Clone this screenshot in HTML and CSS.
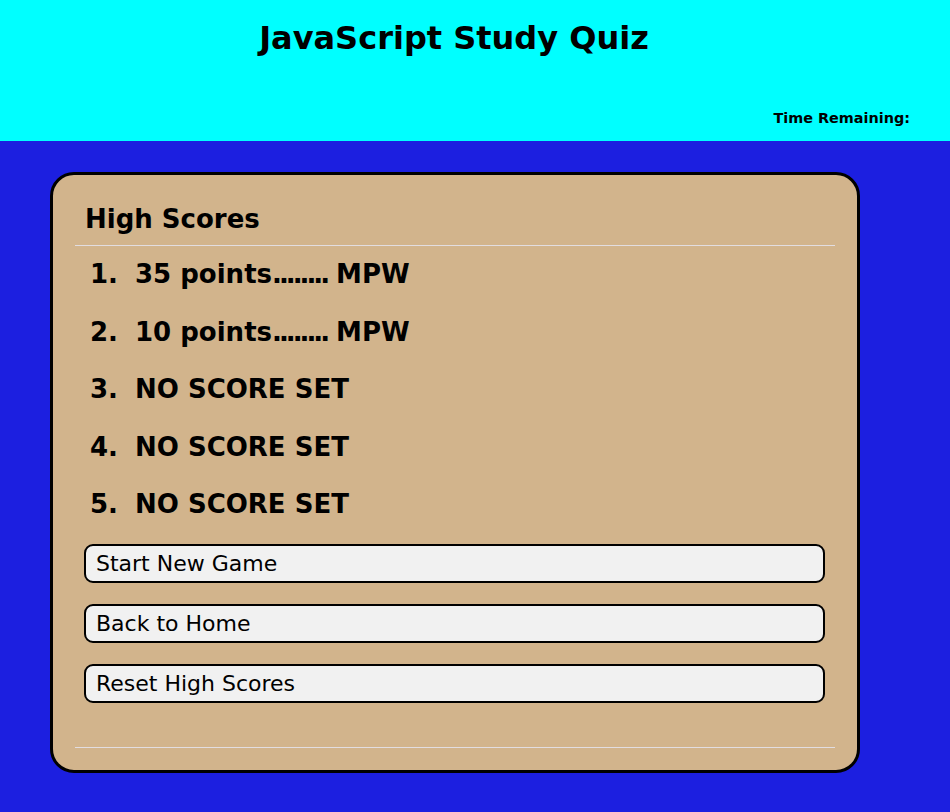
FILE: index.html
```html
<!DOCTYPE html>
<html>
<head>
<meta charset="utf-8">
<link rel="stylesheet" href="styles.css">
</head>
<body>
<header class="top">
  <h1 class="title">JavaScript Study Quiz</h1>
  <div class="timer">Time Remaining:</div>
</header>
<main class="main">
  <section class="card">
    <h2 class="card-title">High Scores</h2>
    <hr class="rule">
    <ol class="scores">
      <li>35 points<span class="dots">........</span> MPW</li>
      <li>10 points<span class="dots">........</span> MPW</li>
      <li>NO SCORE SET</li>
      <li>NO SCORE SET</li>
      <li>NO SCORE SET</li>
    </ol>
    <div class="actions">
      <button class="btn">Start New Game</button>
      <button class="btn">Back to Home</button>
      <button class="btn">Reset High Scores</button>
    </div>
    <hr class="rule rule-bottom">
  </section>
</main>
</body>
</html>
```
FILE: styles.css
```css
* { box-sizing: border-box; }
html, body { margin: 0; padding: 0; }
body {
  background: #1c1fe0;
  font-family: "DejaVu Sans", sans-serif;
  color: #000;
  min-height: 812px;
}
.top {
  background: #00ffff;
  height: 141px;
  display: flex;
  flex-direction: column;
  justify-content: space-between;
  padding: 0 40px 15px 0;
}
.title {
  margin: 19px 0 0;
  text-align: center;
  font-size: 32px;
  font-weight: bold;
  padding-right: 2px;
}
.timer {
  text-align: right;
  font-size: 14.4px;
  font-weight: bold;
}
.main {
  padding: 31px 90px 40px 50px;
}
.card {
  background: #d2b48c;
  border: 3px solid #000;
  border-radius: 24px;
  padding: 24px 22px 22px;
}
.card-title {
  margin: 0;
  padding-left: 10px;
  font-size: 26px;
  font-weight: bold;
  line-height: 40px;
}
.rule {
  border: 0;
  border-top: 1px solid #e2dde0;
  margin: 6px 0 0;
}
.scores {
  margin: 0;
  padding: 0 0 0 15px;
  font-size: 26px;
  font-weight: bold;
  list-style: none;
  counter-reset: item;
}
.scores li {
  counter-increment: item;
  line-height: 57.5px;
}
.scores li::before {
  content: counter(item) ".";
  display: inline-block;
  width: 45px;
}
.dots {
  letter-spacing: -3px;
}
.actions {
  display: flex;
  flex-direction: column;
  gap: 21px;
  padding: 10px 10px 0 9px;
}
.btn {
  height: 39px;
  background: #f1f1f1;
  border: 2px solid #000;
  border-radius: 9px;
  font-family: "DejaVu Sans", sans-serif;
  font-size: 22px;
  text-align: left;
  padding: 0 10px;
  color: #000;
}
.rule-bottom {
  margin-top: 44px;
}
```
